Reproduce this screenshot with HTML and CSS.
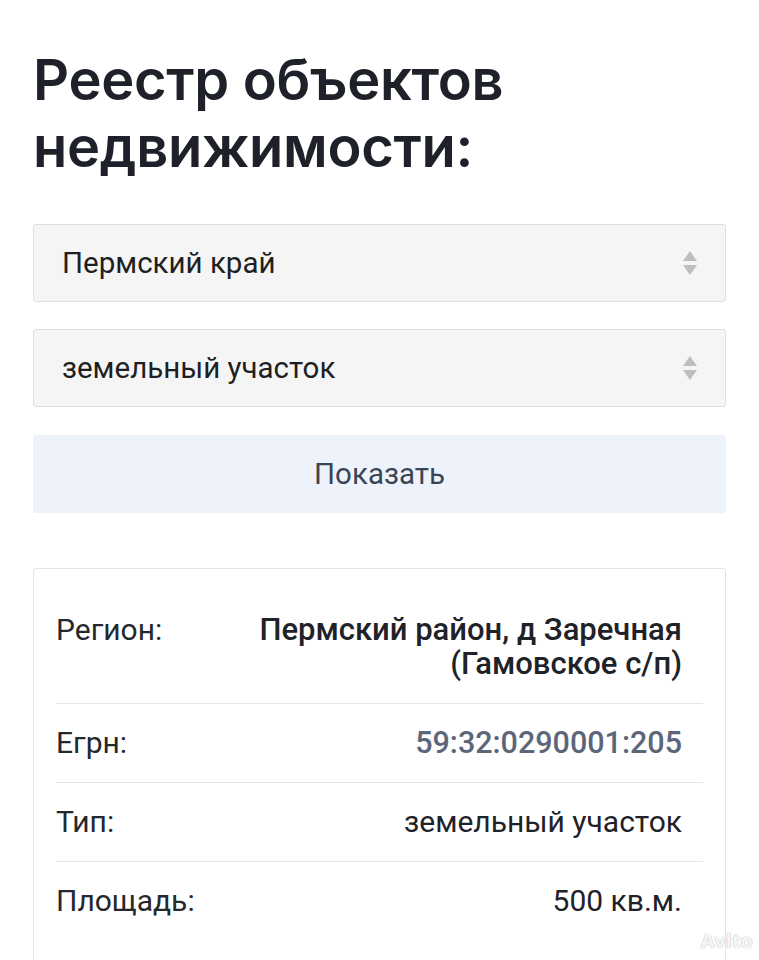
FILE: index.html
```html
<!DOCTYPE html>
<html lang="ru">
<head>
<meta charset="utf-8">
<link rel="stylesheet" href="styles.css">
</head>
<body>
<main class="page">
  <h1 class="title">Реестр объектов недвижимости:</h1>
  <div class="select">
    <span class="select-text">Пермский край</span>
    <span class="arrows"><span class="up"></span><span class="down"></span></span>
  </div>
  <div class="select">
    <span class="select-text">земельный участок</span>
    <span class="arrows"><span class="up"></span><span class="down"></span></span>
  </div>
  <div class="button">Показать</div>
  <section class="card">
    <div class="row">
      <span class="label">Регион:</span>
      <span class="value strong">Пермский район, д Заречная<br>(Гамовское с/п)</span>
    </div>
    <div class="row">
      <span class="label">Егрн:</span>
      <span class="value muted">59:32:0290001:205</span>
    </div>
    <div class="row">
      <span class="label">Тип:</span>
      <span class="value">земельный участок</span>
    </div>
    <div class="row">
      <span class="label">Площадь:</span>
      <span class="value">500 кв.м.</span>
    </div>
  </section>
  <span class="watermark">Avito</span>
</main>
</body>
</html>
```
FILE: styles.css
```css
html, body {
  margin: 0;
  padding: 0;
  background: #ffffff;
}
.page {
  position: relative;
  padding: 47px 33px 0 33px;
  height: 960px;
  box-sizing: border-box;
  overflow: hidden;
  font-family: Roboto, "Noto Sans", sans-serif;
  color: #1f2228;
}
.title {
  margin: 0 0 43px 0;
  font-family: Inter, "Noto Sans", sans-serif;
  font-weight: 600;
  font-size: 56px;
  line-height: 67px;
  color: #1e2129;
  letter-spacing: -0.3px;
  max-width: 520px;
}
.select {
  height: 78px;
  box-sizing: border-box;
  border: 1px solid #dedfe0;
  border-radius: 3px;
  background: #f5f5f5;
  display: flex;
  align-items: center;
  justify-content: space-between;
  padding: 0 28px 0 28px;
  margin-bottom: 27px;
}
.select-text {
  font-size: 29.5px;
  color: #1d1f22;
}
.arrows {
  display: flex;
  flex-direction: column;
  gap: 4px;
}
.up, .down {
  width: 0;
  height: 0;
  border-left: 7px solid transparent;
  border-right: 7px solid transparent;
}
.up { border-bottom: 10px solid #bdbec0; }
.down { border-top: 10px solid #bdbec0; }
.button {
  height: 78px;
  display: flex;
  align-items: center;
  justify-content: center;
  background: #eef3fb;
  border-radius: 3px;
  font-size: 29.5px;
  color: #3a4556;
  margin-top: 28px;
  margin-bottom: 55px;
}
.card {
  border: 1px solid #e3e4e6;
  border-radius: 3px;
  padding: 22px 22px 0 22px;
  height: 500px;
}
.row {
  display: flex;
  justify-content: space-between;
  align-items: flex-start;
  padding: 22px 21px 22px 0;
  border-bottom: 1px solid #e4e5e7;
  font-size: 30px;
  line-height: 34px;
}
.row:last-child { border-bottom: none; }
.label { color: #25282d; }
.value { text-align: right; color: #1f2228; }
.value.strong { font-weight: 500; font-size: 31px; }
.value.muted { color: #5d6678; font-weight: 500; font-size: 30.5px; }
.watermark {
  position: absolute;
  right: 6px;
  bottom: 6px;
  font-family: "Open Sans", sans-serif;
  font-weight: 700;
  font-size: 20px;
  color: rgba(255,255,255,0.9);
  text-shadow: 0 0 1px #bbb, 0 0 1px #bbb;
}
```
